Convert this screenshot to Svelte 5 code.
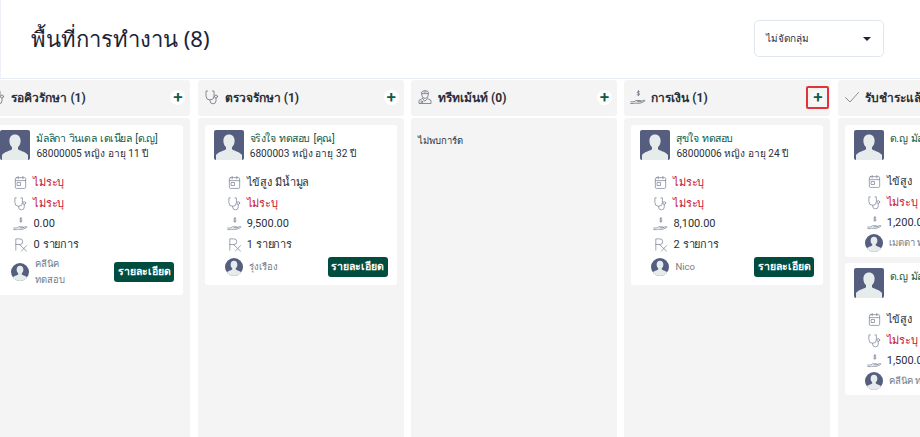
<script>
  const columns = [
    { title: 'รอคิวรักษา (1)', icon: 'steth', cards: [
      { name: 'มัลลิกา วินเดล เดเนียล [ด.ญ]', info: '68000005 หญิง อายุ 11 ปี', symptom: '', doctor: '', money: '0.00', rx: '0 รายการ', by: 'คลีนิค ทดสอบ', wrap: true }
    ] },
    { title: 'ตรวจรักษา (1)', icon: 'steth', cards: [
      { name: 'จริงใจ ทดสอบ [คุณ]', info: '6800003 หญิง อายุ 32 ปี', symptom: 'ไข้สูง มีน้ำมูล', doctor: '', money: '9,500.00', rx: '1 รายการ', by: 'รุ่งเรือง' }
    ] },
    { title: 'ทรีทเม้นท์ (0)', icon: 'nurse', cards: [] },
    { title: 'การเงิน (1)', icon: 'hand', marked: true, cards: [
      { name: 'สุขใจ ทดสอบ', info: '68000006 หญิง อายุ 24 ปี', symptom: '', doctor: '', money: '8,100.00', rx: '2 รายการ', by: 'Nico' }
    ] },
    { title: 'รับชำระแล้ว (2)', icon: 'check', cards: [
      { name: 'ด.ญ มัลลิกา วินเดล เดเนียล', info: '', symptom: 'ไข้สูง', doctor: '', money: '1,200.00', by: 'เมตตา ทดสอบ' },
      { name: 'ด.ญ มัลลิกา วินเดล เดเนียล', info: '', symptom: 'ไข้สูง', doctor: '', money: '1,500.00', by: 'คลีนิค ทดสอบ' }
    ] }
  ];
</script>

{#snippet icon(kind)}
  <svg class="ico" viewBox="0 0 16 16" fill="none" stroke="currentColor" stroke-width="0.8" stroke-linecap="round" stroke-linejoin="round">
    {#if kind === 'cal'}
      <rect x="2.500" y="2.800" width="11" height="11.500" rx="1.200" />
      <path d="M2.500 6h11M5.500 1.500v2.600M10.500 1.500v2.600" />
      <rect x="4.800" y="8" width="3.200" height="3.200" />
    {:else if kind === 'steth'}
      <path d="M3.500 2H2v5a4 4 0 0 0 8 0V2H8.500" />
      <path d="M6 11v.8a3 3 0 0 0 6 0V9" />
      <circle cx="12" cy="7.500" r="1.500" />
    {:else if kind === 'hand'}
      <path d="M.8 12.800h3.200l2-1.300h4.400c.8 0 .8 1.100 0 1.100H7.500" />
      <path d="M10.500 12.400l3.600-1.200c.8-.2 1.100.8.4 1.100l-4.300 1.900H4.500l-.8.300H.8" />
      <path d="M9.600 2.800C9 2.300 7.300 2.400 7.300 3.400c0 1.200 2.400.6 2.400 1.800 0 .9-1.700 1-2.600.5M8.400 1.500v5.200" />
    {:else if kind === 'rx'}
      <path d="M3 14V2h4.400a3 3 0 0 1 0 6H3M6.800 8l7.600 7M14.400 9.200 9 15" />
    {:else if kind === 'check'}
      <path d="M1.500 8.500 6 13l8.500-9.500" />
    {:else if kind === 'nurse'}
      <path d="M4.800 2.800C6 1.200 10 1.200 11.200 2.800v3.400a3.200 3.200 0 0 1-6.400 0zM4.800 4.600h6.400M7 3h2" />
      <path d="M5.400 9.600 2 11.400v3.100h12v-3.100l-3.400-1.800-2.600 2.400z" />
      <circle cx="4.800" cy="12.800" r=".9" />
    {/if}
  </svg>
{/snippet}

{#snippet person(cls)}
  <svg class={cls} viewBox="0 0 30 30">
    <rect width="30" height="30" fill="#555e7e" />
    <path d="M15 4.500c-3.600 0-5.600 2.700-5.600 6.200 0 2.600 1 5 2.600 6.300v2.200c-1 1.200-8 2.600-10 5.800V30h26v-5c-2-3.200-9-4.600-10-5.800V17c1.600-1.300 2.600-3.700 2.600-6.300 0-3.500-2-6.200-5.600-6.200z" fill="#e6ebec" />
  </svg>
{/snippet}

<header class="top">
  <h1>พื้นที่การทำงาน (8)</h1>
  <div class="select">
    <span>ไม่จัดกลุ่ม</span>
    <i class="caret"></i>
  </div>
</header>

<main class="board">
  {#each columns as col}
    <section class="col">
      <div class="col-head">
        <span class="col-ico">{@render icon(col.icon)}</span>
        <span class="col-title">{col.title}</span>
        <span class="add-wrap" class:marked={col.marked}>
          <button class="add" type="button" aria-label="เพิ่ม">+</button>
        </span>
      </div>
      <div class="col-body">
        {#each col.cards as card}
          <article class="card">
            <div class="who">
              {@render person('avatar')}
              <div class="who-text">
                <div class="name">{card.name}</div>
                <div class="info">{card.info}</div>
              </div>
            </div>
            <ul class="facts">
              <li>
                {@render icon('cal')}
                <span class:none={!card.symptom}>{card.symptom || 'ไม่ระบุ'}</span>
              </li>
              <li>
                {@render icon('steth')}
                <span class:none={!card.doctor}>{card.doctor || 'ไม่ระบุ'}</span>
              </li>
              <li>
                {@render icon('hand')}
                <span class="money">{card.money}</span>
              </li>
              {#if card.rx}
                <li>
                  {@render icon('rx')}
                  <span>{card.rx}</span>
                </li>
              {/if}
            </ul>
            <div class="foot" class:tight={!card.rx}>
              <span class="round">{@render person('round-img')}</span>
              <div class="by"><span class:wrap={card.wrap}>{card.by}</span></div>
              <button class="detail" type="button">รายละเอียด</button>
            </div>
          </article>
        {/each}
        {#if col.cards.length === 0}
          <p class="empty">ไม่พบการ์ด</p>
        {/if}
      </div>
    </section>
  {/each}
</main>

<style>
  :global(body) {
    margin: 0;
    background: #fff;
    overflow: hidden;
    height: 437px;
    font-family: Roboto, "Noto Sans", sans-serif;
    color: #1d2433;
  }

  .top {
    display: flex;
    align-items: center;
    justify-content: space-between;
    height: 79px;
    padding: 0 36px 0 30px;
    border-bottom: 1px solid #e8ecf3;
    border-left: 1px solid #eef1f8;
    box-sizing: border-box;
  }

  h1 {
    margin: 0;
    font-family: "Noto Sans", sans-serif;
    font-size: 22px;
    font-weight: 400;
    color: #1a2338;
  }

  .select {
    display: flex;
    align-items: center;
    justify-content: space-between;
    width: 130px;
    height: 37px;
    padding: 0 12px 0 11px;
    margin-top: -2px;
    border: 1px solid #e2e7ef;
    border-radius: 5px;
    box-sizing: border-box;
    font-size: 10px;
    color: #2c3446;
  }

  .caret {
    border: 4px solid transparent;
    border-top: 4px solid #1d2433;
    border-bottom: 0;
    margin-top: 2px;
  }

  .board {
    display: flex;
    gap: 7.33px;
    margin-left: -15.6px;
    width: 1200px;
    padding-top: 1px;
  }

  .col {
    flex: 0 0 206px;
    display: flex;
    flex-direction: column;
    gap: 2px;
  }

  .col-head {
    display: flex;
    align-items: center;
    gap: 3px;
    height: 36px;
    padding: 0 1px 2px 6px;
    box-sizing: border-box;
    background: #f4f4f4;
    border-radius: 3px;
  }

  .col-ico {
    display: flex;
    color: #6b7280;
  }

  .col-ico .ico {
    width: 16px;
    height: 16px;
  }

  .col-title {
    flex: 1;
    margin-left: 2px;
    font-size: 12px;
    font-weight: 700;
    color: #2a2f3a;
    white-space: nowrap;
    overflow: hidden;
  }

  .add-wrap {
    display: flex;
    align-items: center;
    justify-content: center;
    width: 23px;
    height: 23px;
    box-sizing: border-box;
    border: 2px solid transparent;
    border-radius: 2px;
  }

  .add-wrap.marked {
    border-color: #e53238;
  }

  .add {
    display: flex;
    align-items: center;
    justify-content: center;
    width: 15px;
    height: 15px;
    padding: 0;
    border: 0;
    border-radius: 50%;
    background: #fff;
    color: #0f5c48;
    font: 500 17px/1 Roboto, sans-serif;
  }

  .marked .add {
    background: #f8f8f8;
  }

  .col-body {
    display: flex;
    flex-direction: column;
    gap: 6px;
    min-height: 330px;
    padding: 7px;
    background: #f4f4f4;
    border-radius: 3px;
  }

  .card {
    padding: 5px 9px 7px;
    background: #fff;
    border-radius: 3px;
  }

  .who {
    display: flex;
    gap: 6px;
  }

  .avatar {
    flex: none;
    width: 30px;
    height: 30px;
    border-radius: 2px;
  }

  .who-text {
    min-width: 0;
    padding-top: 1px;
    line-height: 15px;
    white-space: nowrap;
  }

  .name {
    font-size: 10.5px;
    letter-spacing: -0.45px;
    word-spacing: 1.5px;
    color: #0f5c48;
  }

  .info {
    font-size: 10.1px;
    color: #2a2f3a;
  }

  .facts {
    list-style: none;
    margin: 11px 0 0;
    padding: 0 0 0 13px;
  }

  .facts li {
    display: flex;
    align-items: center;
    gap: 5px;
    height: 20.7px;
    font-size: 11px;
    letter-spacing: -0.25px;
    word-spacing: 1px;
    white-space: nowrap;
    color: #2a2f3a;
  }

  .facts .money {
    letter-spacing: 0;
  }

  .facts .ico {
    flex: none;
    width: 15px;
    height: 15px;
    color: #7d8698;
  }

  .none {
    color: #c8102e;
  }

  .foot {
    display: flex;
    align-items: center;
    gap: 6px;
    min-height: 22px;
    margin-top: 1px;
    padding-left: 11px;
  }

  .foot.tight {
    margin-top: -1px;
    margin-bottom: -4px;
  }

  .round {
    display: flex;
    flex: none;
    overflow: hidden;
    width: 18px;
    height: 18px;
    border-radius: 50%;
  }

  .round :global(.round-img) {
    width: 18px;
    height: 18px;
  }

  .by {
    flex: 1;
    min-width: 0;
    font-size: 9.5px;
    line-height: 16px;
    color: #757b86;
    white-space: nowrap;
  }

  .by .wrap {
    display: block;
    width: 32px;
    white-space: normal;
  }

  .detail {
    flex: none;
    height: 20px;
    width: 60px;
    padding: 0;
    border: 0;
    border-radius: 3px;
    background: #004d40;
    color: #fff;
    font-family: inherit;
    font-size: 10.5px;
    font-weight: 700;
    white-space: nowrap;
  }

  .empty {
    margin: 8px 0 0;
    font-size: 9.5px;
    line-height: 15px;
    color: #2a2f3a;
  }
</style>
